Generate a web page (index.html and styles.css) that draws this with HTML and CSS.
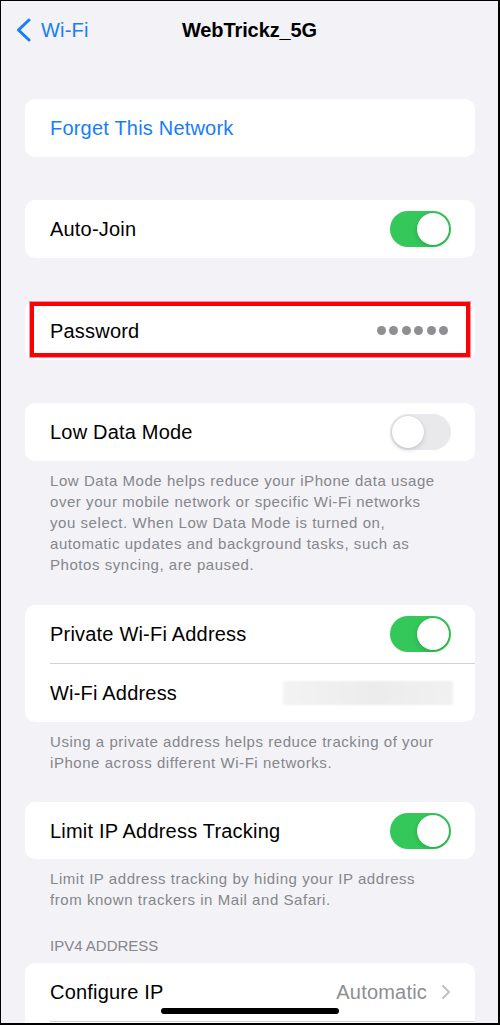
FILE: index.html
```
<!DOCTYPE html>
<html>
<head>
<meta charset="utf-8">
<meta name="viewport" content="width=device-width, initial-scale=1">
<title>WebTrickz_5G</title>
<link rel="stylesheet" href="styles.css">
</head>
<body>
<div class="screen">
<header class="navbar">
<a class="back" href="#"><svg width="18" height="24" viewBox="0 0 18 24"><path d="M14 2 L3.5 12 L14 22" fill="none" stroke="currentColor" stroke-width="3" stroke-linecap="round" stroke-linejoin="round"/></svg>Wi-Fi</a>
<h1>WebTrickz_5G</h1>
<span></span>
</header>

<section class="group first">
<div class="row"><a class="action" href="#">Forget This Network</a></div>
</section>

<section class="group">
<div class="row"><span>Auto-Join</span><span class="switch on"><i></i></span></div>
</section>

<section class="group password">
<div class="row tall"><span>Password</span><span class="dots"><i></i><i></i><i></i><i></i><i></i><i></i></span></div>
<div class="highlight"></div>
</section>

<section class="group">
<div class="row"><span>Low Data Mode</span><span class="switch"><i></i></span></div>
</section>
<p class="note">Low Data Mode helps reduce your iPhone data usage<br>over your mobile network or specific Wi-Fi networks<br>you select. When Low Data Mode is turned on,<br>automatic updates and background tasks, such as<br>Photos syncing, are paused.</p>

<section class="group after-note">
<div class="row"><span>Private Wi-Fi Address</span><span class="switch on"><i></i></span></div>
<div class="sep"></div>
<div class="row"><span>Wi-Fi Address</span><span class="blurred"></span></div>
</section>
<p class="note">Using a private address helps reduce tracking of your<br>iPhone across different Wi-Fi networks.</p>

<section class="group after-note limit">
<div class="row"><span>Limit IP Address Tracking</span><span class="switch on"><i></i></span></div>
</section>
<p class="note">Limit IP address tracking by hiding your IP address<br>from known trackers in Mail and Safari.</p>

<h2 class="header">IPv4 Address</h2>
<section class="group under-header">
<div class="row"><span>Configure IP</span><span class="detail">Automatic<svg width="10" height="16" viewBox="0 0 10 16"><path d="M2 2 L8 8 L2 14" fill="none" stroke="currentColor" stroke-width="2.2" stroke-linecap="round" stroke-linejoin="round"/></svg></span></div>
<div class="sep"></div>
<div class="row"></div>
</section>

<div class="home-indicator"></div>
</div>
</body>
</html>
```

FILE: styles.css
```
*{box-sizing:border-box;}
body{margin:0;background:#fff;font-family:"Liberation Sans",Arial,Helvetica,sans-serif;color:#000;}
a{text-decoration:none;}
.screen{position:relative;width:500px;height:1025px;overflow:hidden;background:#f2f2f7;border:solid #000;border-width:1px 2px 2px 1px;}

/* top bar */
.navbar{display:grid;grid-template-columns:1fr auto 1fr;align-items:center;height:24px;margin-top:17px;padding:0 14px;}
.back{display:flex;align-items:center;color:#167ef8;font-size:20px;line-height:24px;letter-spacing:.2px;}
.back svg{margin-right:8px;}
.navbar h1{margin:0;font-size:20px;line-height:24px;font-weight:bold;letter-spacing:-.1px;}

/* grouped rows */
.group{position:relative;margin:43px 23px 0 24px;background:#fff;border-radius:10px;}
.group.first{margin-top:57px;}
.group.after-note{margin-top:30px;}
.group.limit{margin-top:29px;}
.group.limit .row{height:57px;}
.group.under-header{margin-top:7px;}
.row{display:flex;align-items:center;justify-content:space-between;height:58px;padding:0 24px 0 25px;font-size:20px;line-height:24px;letter-spacing:.2px;}
.row.tall{height:59px;padding-right:27px;}
.action{color:#167ef8;}
.sep{height:1px;margin-left:25px;background:#d1d1d6;}
.detail{display:flex;align-items:center;gap:14px;color:#8e8e93;}
.detail svg{color:#c4c4c7;}

.switch{display:flex;justify-content:flex-start;width:61px;height:36px;padding:2px;border-radius:18px;background:#e9e9eb;}
.switch.on{justify-content:flex-end;background:#34c759;}
.switch i{width:32px;height:32px;border-radius:50%;background:#fff;box-shadow:0 2px 5px rgba(0,0,0,.14),0 0 0 .5px rgba(0,0,0,.06);}

.dots{display:flex;gap:3.4px;}
.dots i{width:9px;height:9px;border-radius:50%;background:#8e8e93;}
.highlight{position:absolute;top:1px;bottom:3px;left:5px;right:5px;border:4px solid #ff0000;box-shadow:0 0 0 1px rgba(255,50,100,.55);}

.blurred{width:170px;height:24px;margin-right:-2px;background:linear-gradient(90deg,#f3f3f3,#ececec 55%,#f1f1f1);filter:blur(1px);}

/* footers and headers */
.note{margin:9px 10px 0 49px;font-size:15px;line-height:21px;color:#86868b;letter-spacing:.55px;}
.header{margin:26px 0 0 49px;font-size:15px;line-height:20px;font-weight:normal;color:#86868b;text-transform:uppercase;}

.home-indicator{position:absolute;left:50%;bottom:9px;width:178px;height:6px;margin-left:-89px;border-radius:3px;background:#000;}
```
